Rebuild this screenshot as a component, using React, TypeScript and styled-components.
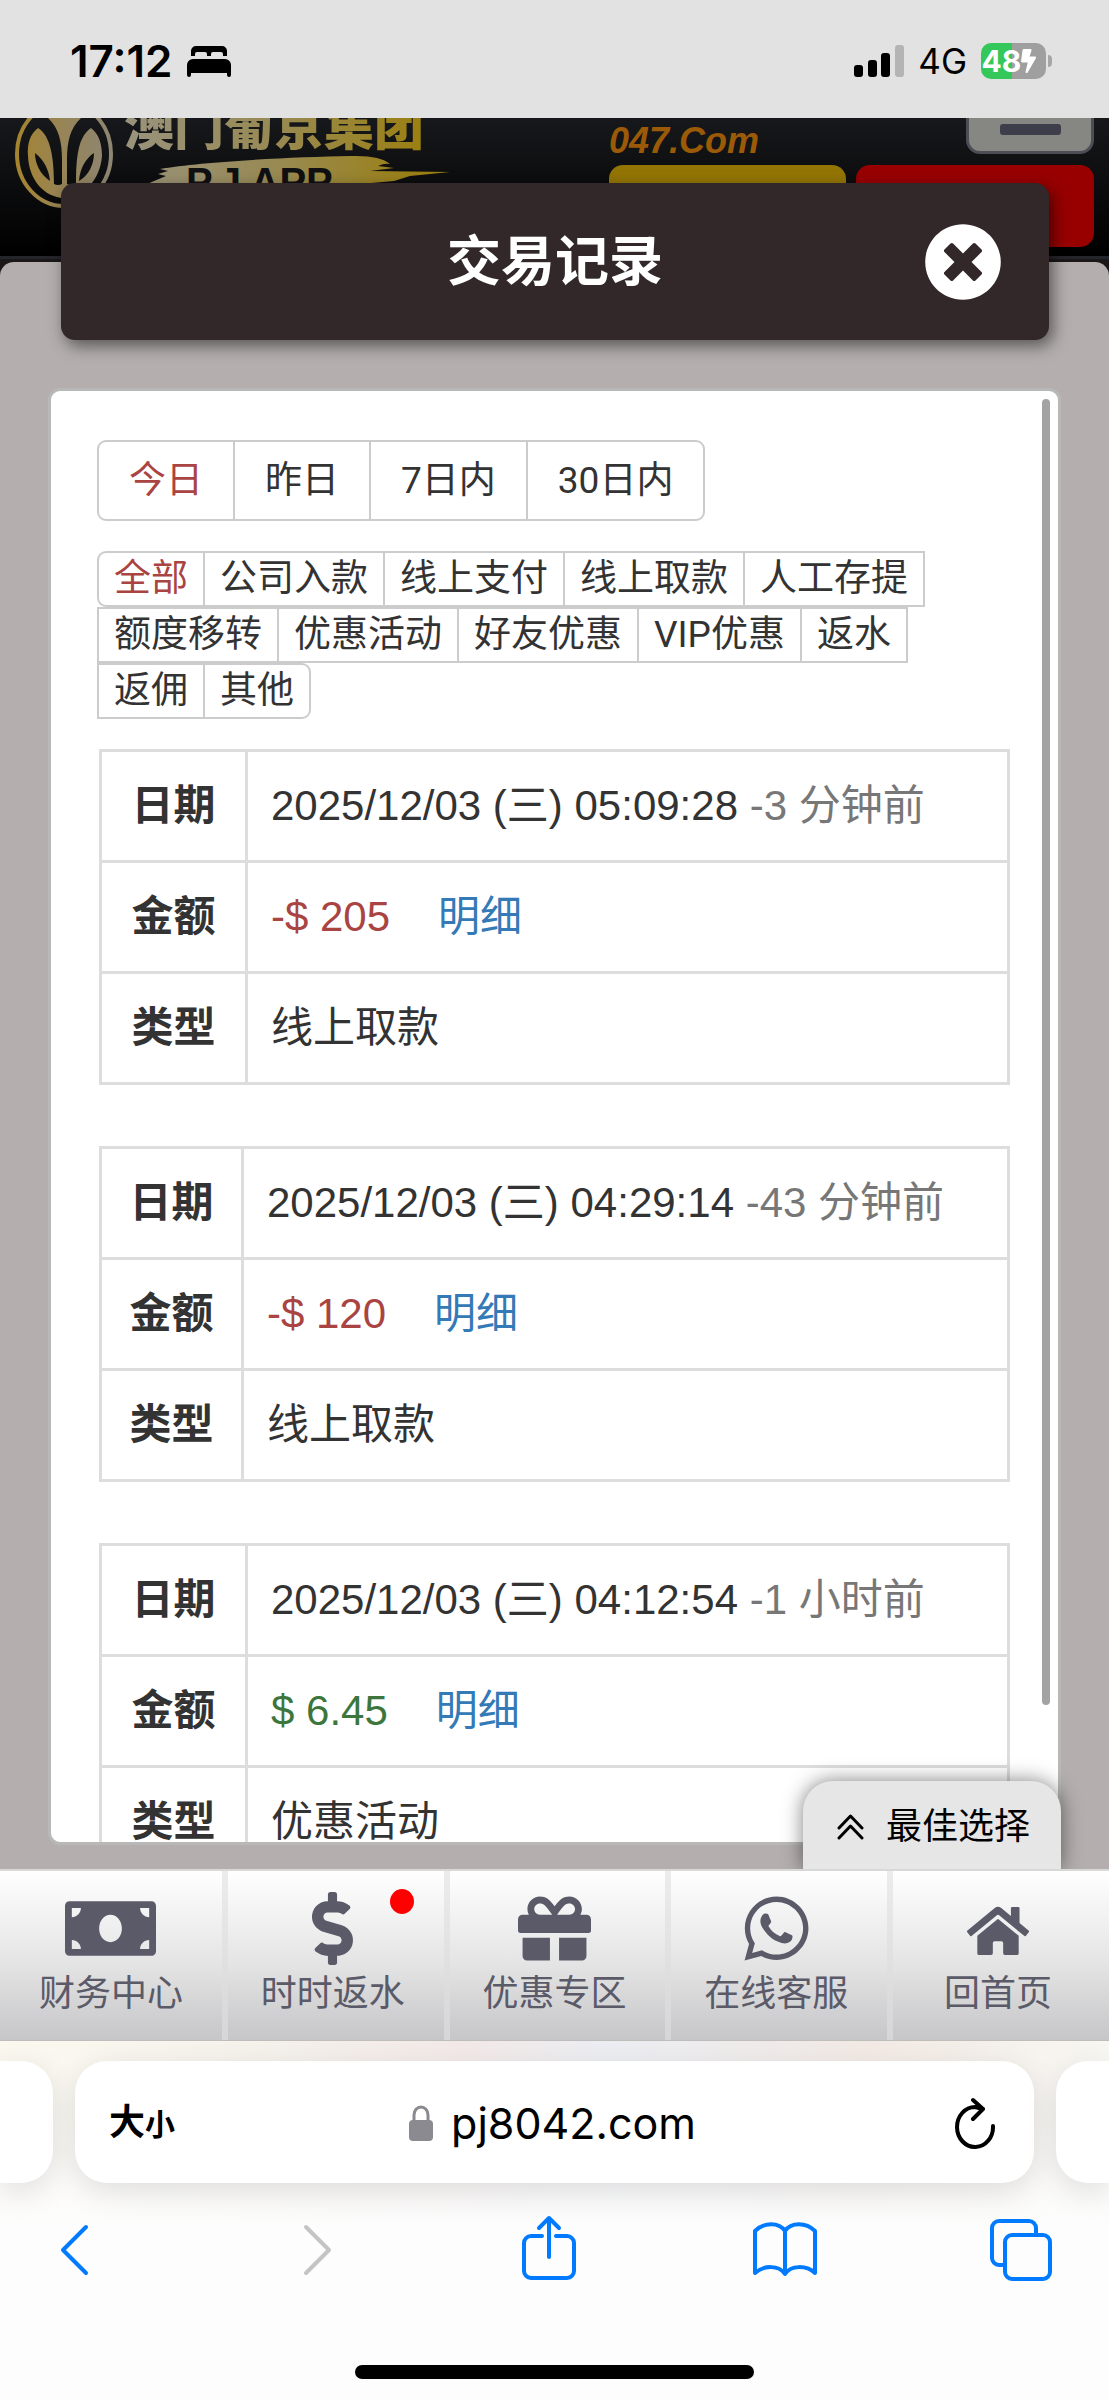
import React, { useState } from "react";
import styled, { createGlobalStyle } from "styled-components";
import {
  FaBolt,
  FaDollarSign,
  FaGift,
  FaHome,
  FaMoneyBill,
  FaTimesCircle,
  FaWhatsapp,
} from "react-icons/fa";

const webFont = '"Liberation Sans", "Noto Sans CJK SC", sans-serif';
const tabFont = 'Roboto, "Noto Sans CJK SC", sans-serif';
const systemFont = 'Inter, "Noto Sans CJK SC", sans-serif';
const line = "#ccc";

const GlobalStyle = createGlobalStyle`
  *, *::before, *::after { box-sizing: border-box; }
  body { margin: 0; background: #fff; font-family: ${webFont}; color: #333; }
  button { font: inherit; color: inherit; background: none; border: 0; padding: 0; margin: 0; }
  a { text-decoration: none; }
  svg { display: block; flex: none; }
`;

const Screen = styled.div`
  display: flex;
  flex-direction: column;
  height: 100vh;
  overflow: hidden;
`;

/* ---------- status bar ---------- */

const StatusBar = styled.header`
  display: flex;
  align-items: center;
  justify-content: space-between;
  height: 118px;
  padding: 4px 57px 0 70px;
  background: #e2e2e2;
  color: #000;
  font-family: ${systemFont};
`;

const StatusGroup = styled.div`
  display: flex;
  align-items: center;
  gap: 14px;
`;

const Clock = styled.span`
  font-size: 44px;
  line-height: 48px;
  font-weight: 600;
`;

const Network = styled.span`
  font-size: 35px;
  line-height: 40px;
`;

const Battery = styled.div`
  display: flex;
  align-items: center;
  gap: 2px;
`;

const BatteryBody = styled.div`
  display: flex;
  align-items: center;
  justify-content: center;
  width: 65px;
  height: 36px;
  border-radius: 10px;
  background: linear-gradient(90deg, #34c759 48%, #9f9f9f 48%);
  color: #fff;
  font-size: 30px;
  line-height: 36px;
  font-weight: 700;
`;

const BatteryTip = styled.div`
  width: 4px;
  height: 12px;
  border-radius: 0 4px 4px 0;
  background: #a6a6a6;
`;

/* ---------- site behind the dialog ---------- */

const Stage = styled.main`
  position: relative;
  flex: 1;
  min-height: 0;
  display: grid;
  grid-template: minmax(0, 1fr) / minmax(0, 1fr);
  overflow: hidden;
`;

const Backdrop = styled.div`
  grid-area: 1 / 1;
  display: flex;
  flex-direction: column;
  background: #1c1819;
`;

const SiteHeader = styled.div`
  display: flex;
  justify-content: space-between;
  height: 141px;
  padding-right: 15px;
  overflow: hidden;
  background: linear-gradient(#17181b, #000);
  border-bottom: 3px solid #24242b;
`;

const SiteActions = styled.div`
  display: grid;
  grid-template-columns: 237px 238px;
  grid-template-rows: 36px 82px;
  gap: 11px 10px;
`;

const Domain = styled.span`
  padding-top: 3px;
  color: #9b5a08;
  font-size: 36px;
  line-height: 40px;
  font-weight: 700;
  font-style: italic;
`;

const MenuButton = styled.button`
  justify-self: end;
  display: flex;
  align-items: flex-start;
  justify-content: center;
  width: 128px;
  height: 36px;
  padding-top: 6px;
  border: 3px solid #4d4d56;
  border-top: 0;
  border-radius: 0 0 14px 14px;
  background: #868783;
`;

const MenuBar = styled.span`
  width: 61px;
  height: 11px;
  border-radius: 3px;
  background: #3e3d4a;
`;

const SiteButton = styled.button<{ $color: string }>`
  border-radius: 14px;
  background: ${(p) => p.$color};
`;

const SiteBody = styled.div`
  flex: 1;
  margin-top: 3px;
  border-radius: 14px 14px 0 0;
  background: #b4aeae;
`;

/* ---------- dialog ---------- */

const Dialog = styled.section`
  grid-area: 1 / 1;
  position: relative;
  display: flex;
  flex-direction: column;
  min-height: 0;
  padding: 65px 48px 24px;
`;

const DialogHeader = styled.div`
  display: grid;
  grid-template-columns: 1fr auto 1fr;
  align-items: center;
  height: 157px;
  flex: none;
  margin: 0 12px 48px 13px;
  padding: 0 47px;
  border-radius: 14px;
  background: #32282a;
  color: #fff;
  box-shadow: 4px 6px 16px rgba(0, 0, 0, 0.5);
`;

const DialogTitle = styled.h1`
  grid-column: 2;
  margin: 0;
  font-size: 54px;
  line-height: 80px;
  font-weight: 700;
`;

const CloseButton = styled.button`
  justify-self: end;
`;

const Panel = styled.div`
  position: relative;
  flex: 1;
  min-height: 0;
  overflow: hidden;
  padding: 49px 48px 0 46px;
  border: 3px solid #b9b8b8;
  border-radius: 12px;
  background: #fff;
`;

const ScrollThumb = styled.div`
  position: absolute;
  top: 8px;
  right: 8px;
  width: 8px;
  height: 90%;
  border-radius: 4px;
  background: #a3a3a3;
`;

const Tabs = styled.div`
  display: flex;
  flex-wrap: wrap;
  padding-left: 2px;
  margin-bottom: 30px;
  font-family: ${tabFont};
  font-size: 37px;
`;

const Tab = styled.button<{ $active: boolean; $large?: boolean }>`
  height: ${(p) => (p.$large ? 81 : 56)}px;
  padding: 0 ${(p) => (p.$large ? 30 : 15)}px;
  margin-left: -2px;
  border: 2px solid ${line};
  color: ${(p) => (p.$active ? "#a94442" : "#333")};
  line-height: 50px;
  white-space: nowrap;

  &:first-child {
    border-radius: 9px 0 0 9px;
  }
  &:last-child {
    border-radius: 0 9px 9px 0;
  }
`;

const Records = styled.div`
  display: flex;
  flex-direction: column;
  gap: 61px;
  padding-left: 2px;
`;

const RecordTable = styled.table`
  width: 100%;
  border-collapse: collapse;
  table-layout: fixed;
  font-size: 42px;
  line-height: 60px;
`;

const Label = styled.th<{ $width: number }>`
  width: ${(p) => p.$width}px;
  height: 111px;
  padding: 0;
  border: 3px solid #ddd;
  text-align: center;
  font-weight: 700;
`;

const Value = styled.td`
  height: 111px;
  padding: 0 0 0 23px;
  border: 3px solid #ddd;
  white-space: nowrap;
`;

const Ago = styled.span`
  color: #777;
`;

const Amount = styled.span<{ $income: boolean }>`
  margin-right: 48px;
  color: ${(p) => (p.$income ? "#3c763d" : "#a94442")};
`;

const DetailLink = styled.a`
  color: #337ab7;
`;

const BestPick = styled.button`
  position: absolute;
  right: 48px;
  bottom: 0;
  display: flex;
  align-items: center;
  gap: 22px;
  height: 88px;
  padding: 4px 31px 0 34px;
  border-radius: 30px 30px 0 0;
  background: #e6e6e6;
  color: #000;
  font-size: 36px;
  line-height: 50px;
  box-shadow: 0 0 20px rgba(0, 0, 0, 0.5);
`;

/* ---------- site navigation ---------- */

const Nav = styled.nav`
  position: relative;
  display: grid;
  grid-template-columns: repeat(5, 1fr);
  height: 172px;
  flex: none;
  border-top: 2px solid #d8d8d8;
  border-bottom: 1px solid #bfbcbc;
  background: linear-gradient(#fff, #e4e4e4 55%, #c6c6c9);
`;

const NavItem = styled.a`
  position: relative;
  display: flex;
  flex-direction: column;
  align-items: center;
  padding-top: 18px;
  color: #5b5a69;
  font-size: 36px;
  line-height: 54px;

  & + &::before {
    content: "";
    position: absolute;
    left: 0;
    top: 0;
    bottom: 0;
    width: 6px;
    background: linear-gradient(#ececec, #d6d6d6);
  }
`;

const NavIcon = styled.span`
  display: flex;
  align-items: center;
  justify-content: center;
  height: 78px;
`;

const HomeSlot = styled.span`
  padding-top: 6px;
`;

const Dot = styled.span`
  position: absolute;
  top: 18px;
  right: 30px;
  width: 24px;
  height: 25px;
  border-radius: 50%;
  background: #f00;
`;

/* ---------- browser chrome ---------- */

const BrowserBar = styled.footer`
  display: flex;
  flex-direction: column;
  height: 359px;
  flex: none;
  padding-top: 20px;
  background:
    linear-gradient(rgba(255, 255, 255, 0), #fdfdfd 190px),
    linear-gradient(90deg, #fbf8ef, #f8f6ee 14%, #f3eae8 42%, #eceef3 55%, #f3eae5 78%, #f8f7f2);
  color: #000;
  font-family: ${systemFont};
`;

const AddressRow = styled.div`
  display: flex;
  gap: 22px;
  height: 122px;
`;

const SideCard = styled.div<{ $side: "left" | "right" }>`
  width: 53px;
  flex: none;
  border-radius: ${(p) => (p.$side === "left" ? "0 32px 32px 0" : "32px 0 0 32px")};
  background: #fff;
  box-shadow: 0 8px 32px rgba(0, 0, 0, 0.12);
`;

const AddressCard = styled.div`
  display: grid;
  grid-template-columns: 1fr auto 1fr;
  align-items: center;
  flex: 1;
  padding: 2px 38px 0 34px;
  border-radius: 32px;
  background: #fff;
  box-shadow: 0 8px 32px rgba(0, 0, 0, 0.12);
`;

const TextSize = styled.button`
  display: flex;
  align-items: baseline;
  justify-self: start;
  font-size: 36px;
  line-height: 50px;
  font-weight: 700;

  small {
    font-size: 30px;
  }
`;

const Address = styled.div`
  display: flex;
  align-items: center;
  gap: 18px;
  font-size: 43px;
  line-height: 56px;
`;

const Reload = styled.button`
  justify-self: end;
`;

const Toolbar = styled.div`
  display: flex;
  justify-content: space-between;
  align-items: center;
  height: 134px;
  padding: 0 56px 0 45px;
`;

const ToolButton = styled.button<{ $off?: boolean }>`
  color: ${(p) => (p.$off ? "#c4c4c4" : "#007aff")};
`;

const HomeIndicator = styled.div`
  width: 36%;
  height: 14px;
  margin: auto auto 21px;
  border-radius: 7px;
  background: #000;
`;

/* ---------- drawings ---------- */

const Logo = () => (
  <svg width="470" height="141" viewBox="0 118 470 141" role="img" aria-label="澳门葡京集团">
    <defs>
      <linearGradient id="badge" gradientUnits="userSpaceOnUse" x1="15" y1="0" x2="113" y2="0">
        <stop offset="0" stopColor="#a5842e" />
        <stop offset="0.5" stopColor="#978458" />
        <stop offset="1" stopColor="#8d8673" />
      </linearGradient>
      <linearGradient id="word" gradientUnits="userSpaceOnUse" x1="125" y1="0" x2="421" y2="0">
        <stop offset="0" stopColor="#9a937d" />
        <stop offset="0.5" stopColor="#988a54" />
        <stop offset="1" stopColor="#9b8012" />
      </linearGradient>
    </defs>
    <ellipse cx="64" cy="154" rx="47" ry="52" fill="none" stroke="url(#badge)" strokeWidth="4" />
    <path
      fill="url(#badge)"
      d="M38 128C30 134 27 144 28 156C29 180 44 197 64 198C84 197 100 180 102 156C102 144 99 134 91 128C80 136 76 150 76 184Q71 186 67 184V160C67 142 70 128 81 118H48C59 128 62 142 62 160V184Q58 186 54 184C54 150 48 134 38 128Z"
    />
    <path fill="#101013" d="M35 153C44 160 49 170 50 181C40 174 35 164 35 153ZM94 153C86 158 80 168 79 181C89 175 94 164 94 153Z" />
    <text x="124" y="145" fontFamily='"Noto Sans CJK SC", sans-serif' fontWeight="900" fontSize="50" fill="url(#word)">
      澳门葡京集团
    </text>
    <path
      fill="url(#word)"
      d="M147 184L166 176L158 174L168 171L160 169C200 162 290 157 350 156Q380 155 390 164Q384 163 378 166L394 168L370 171L450 172L410 176L394 181L360 184Z"
    />
    <text x="186" y="196" fontFamily='"Liberation Sans", sans-serif' fontWeight="700" fontSize="40" fill="#101013">
      P.J APP
    </text>
  </svg>
);

const Bed = () => (
  <svg width="44" height="32" viewBox="0 0 44 32" fill="currentColor" aria-hidden="true">
    <path d="M4 11V6a5 5 0 0 1 5-5h26a5 5 0 0 1 5 5v5h-4V9a2 2 0 0 0-2-2h-8a2 2 0 0 0-2 2v2h-4V9a2 2 0 0 0-2-2h-8a2 2 0 0 0-2 2v2z" />
    <path d="M0 20a6 6 0 0 1 6-6h32a6 6 0 0 1 6 6v10a2 2 0 0 1-4 0v-2H4v2a2 2 0 0 1-4 0z" />
  </svg>
);

const Signal = () => (
  <svg width="50" height="32" viewBox="0 0 50 32" aria-hidden="true">
    <rect x="0" y="20" width="9" height="12" rx="3" />
    <rect x="14" y="15" width="9" height="17" rx="3" />
    <rect x="27" y="8" width="9" height="24" rx="3" />
    <rect x="41" y="0" width="9" height="32" rx="3" fill="#b4b4b4" />
  </svg>
);

const DoubleChevron = () => (
  <svg width="27" height="26" viewBox="0 0 27 26" fill="none" stroke="currentColor" strokeWidth="3" strokeLinecap="round" strokeLinejoin="round" aria-hidden="true">
    <path d="M2 14L13.500 2L25 14M2 24L13.500 12L25 24" />
  </svg>
);

const Lock = () => (
  <svg width="24" height="36" viewBox="0 0 24 36" aria-hidden="true">
    <path d="M5 17V10a7 8 0 0 1 14 0v7" fill="none" stroke="#8b8a90" strokeWidth="3" />
    <rect y="15" width="24" height="21" rx="4" fill="#8b8a90" />
  </svg>
);

const ReloadIcon = () => (
  <svg width="42" height="52" viewBox="0 0 42 52" fill="none" stroke="currentColor" strokeWidth="4" strokeLinecap="round" strokeLinejoin="round" aria-hidden="true">
    <path d="M39 29A18 20 0 1 1 21 10L29 12M19 3L29 12L19 22" />
  </svg>
);

type ToolName = "back" | "forward" | "share" | "book" | "pages";

const toolPaths: Record<ToolName, string> = {
  back: "M43 12L20 35L43 58",
  forward: "M27 12L50 35L27 58",
  share: "M28 21H17a7 7 0 0 0-7 7V56a7 7 0 0 0 7 7H53a7 7 0 0 0 7-7V28a7 7 0 0 0-7-7H42M35 42V3M25 13L35 3L45 13",
  book: "M35 16C29 7 14 7 5 16V58C14 50 29 50 35 59C41 50 56 50 65 58V16C56 7 41 7 35 16V59",
  pages: "M19 50H14a7 7 0 0 1-7-7V13a7 7 0 0 1 7-7H44a7 7 0 0 1 7 7V19M27 20H58a7 7 0 0 1 7 7V57a7 7 0 0 1-7 7H27a7 7 0 0 1-7-7V27a7 7 0 0 1 7-7Z",
};

const ToolIcon = ({ name }: { name: ToolName }) => (
  <svg width="66" height="70" viewBox="2 0 66 70" fill="none" stroke="currentColor" strokeWidth="4" strokeLinecap="round" strokeLinejoin="round" aria-hidden="true">
    <path d={toolPaths[name]} />
  </svg>
);

/* ---------- data ---------- */

const ranges = ["今日", "昨日", "7日内", "30日内"];
const kinds = [
  "全部", "公司入款", "线上支付", "线上取款", "人工存提", "额度移转",
  "优惠活动", "好友优惠", "VIP优惠", "返水", "返佣", "其他",
];

const records = [
  { time: "2025/12/03 (三) 05:09:28", ago: "-3 分钟前", amount: "-$ 205", income: false, kind: "线上取款", labelWidth: 146 },
  { time: "2025/12/03 (三) 04:29:14", ago: "-43 分钟前", amount: "-$ 120", income: false, kind: "线上取款", labelWidth: 142 },
  { time: "2025/12/03 (三) 04:12:54", ago: "-1 小时前", amount: "$ 6.45", income: true, kind: "优惠活动", labelWidth: 146 },
];

const navItems = [
  { label: "财务中心", icon: <FaMoneyBill style={{ width: 91, height: 73 }} /> },
  { label: "时时返水", icon: <FaDollarSign size={73} />, dot: true },
  { label: "优惠专区", icon: <FaGift size={73} /> },
  { label: "在线客服", icon: <FaWhatsapp size={73} /> },
  { label: "回首页", icon: <HomeSlot><FaHome size={62} /></HomeSlot> },
];

const tools: { name: ToolName; label: string }[] = [
  { name: "back", label: "后退" },
  { name: "forward", label: "前进" },
  { name: "share", label: "分享" },
  { name: "book", label: "书签" },
  { name: "pages", label: "标签页" },
];

export default function App() {
  const [range, setRange] = useState(ranges[0]);
  const [kind, setKind] = useState(kinds[0]);

  return (
    <Screen>
      <GlobalStyle />
      <StatusBar>
        <StatusGroup>
          <Clock>17:12</Clock>
          <Bed />
        </StatusGroup>
        <StatusGroup>
          <Signal />
          <Network>4G</Network>
          <Battery>
            <BatteryBody>
              48
              <FaBolt size={24} viewBox="80 0 350 512" />
            </BatteryBody>
            <BatteryTip />
          </Battery>
        </StatusGroup>
      </StatusBar>

      <Stage>
        <Backdrop>
          <SiteHeader>
            <Logo />
            <SiteActions>
              <Domain>047.Com</Domain>
              <MenuButton aria-label="菜单">
                <MenuBar />
              </MenuButton>
              <SiteButton $color="#937505" aria-label="登录" />
              <SiteButton $color="#980000" aria-label="注册" />
            </SiteActions>
          </SiteHeader>
          <SiteBody />
        </Backdrop>

        <Dialog role="dialog" aria-labelledby="dialog-title">
          <DialogHeader>
            <DialogTitle id="dialog-title">交易记录</DialogTitle>
            <CloseButton aria-label="关闭">
              <FaTimesCircle size={78} />
            </CloseButton>
          </DialogHeader>

          <Panel>
            <Tabs>
              {ranges.map((name) => (
                <Tab key={name} $large $active={name === range} onClick={() => setRange(name)}>
                  {name}
                </Tab>
              ))}
            </Tabs>
            <Tabs>
              {kinds.map((name) => (
                <Tab key={name} $active={name === kind} onClick={() => setKind(name)}>
                  {name}
                </Tab>
              ))}
            </Tabs>
            <Records>
              {records.map((r) => (
                <RecordTable key={r.time}>
                  <tbody>
                    <tr>
                      <Label scope="row" $width={r.labelWidth}>日期</Label>
                      <Value>
                        {r.time} <Ago>{r.ago}</Ago>
                      </Value>
                    </tr>
                    <tr>
                      <Label scope="row" $width={r.labelWidth}>金额</Label>
                      <Value>
                        <Amount $income={r.income}>{r.amount}</Amount>
                        <DetailLink href="#detail">明细</DetailLink>
                      </Value>
                    </tr>
                    <tr>
                      <Label scope="row" $width={r.labelWidth}>类型</Label>
                      <Value>{r.kind}</Value>
                    </tr>
                  </tbody>
                </RecordTable>
              ))}
            </Records>
            <ScrollThumb />
          </Panel>
          <BestPick>
            <DoubleChevron />
            最佳选择
          </BestPick>
        </Dialog>
      </Stage>

      <Nav>
        {navItems.map((item) => (
          <NavItem key={item.label} href="#nav">
            <NavIcon>{item.icon}</NavIcon>
            {item.label}
            {item.dot && <Dot />}
          </NavItem>
        ))}
      </Nav>

      <BrowserBar>
        <AddressRow>
          <SideCard $side="left" />
          <AddressCard>
            <TextSize aria-label="大小">
              大<small>小</small>
            </TextSize>
            <Address>
              <Lock />
              pj8042.com
            </Address>
            <Reload aria-label="重新载入">
              <ReloadIcon />
            </Reload>
          </AddressCard>
          <SideCard $side="right" />
        </AddressRow>
        <Toolbar>
          {tools.map((tool) => (
            <ToolButton key={tool.name} aria-label={tool.label} $off={tool.name === "forward"}>
              <ToolIcon name={tool.name} />
            </ToolButton>
          ))}
        </Toolbar>
        <HomeIndicator />
      </BrowserBar>
    </Screen>
  );
}
